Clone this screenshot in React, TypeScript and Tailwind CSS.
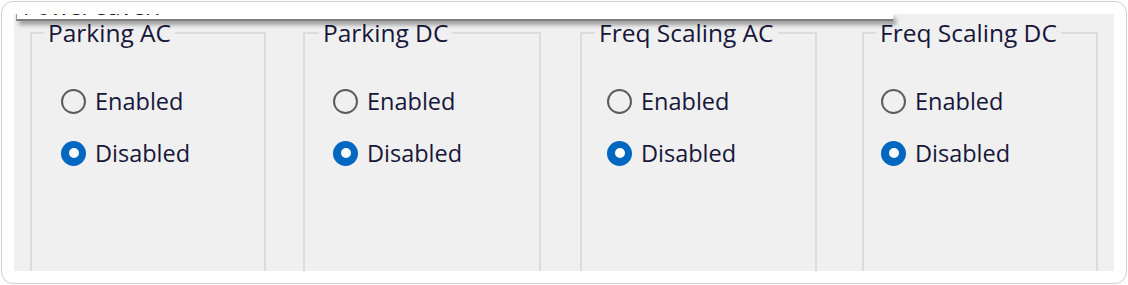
import React from 'react';

const GROUPS = [
  { title: 'Parking AC', ml: 'ml-[16px]', w: 'w-[236px]', legendMl: 'ml-[12px]', radioMl: 'ml-[29px]' },
  { title: 'Parking DC', ml: 'ml-[37px]', w: 'w-[238px]', legendMl: 'ml-[14px]', radioMl: 'ml-[28px]' },
  { title: 'Freq Scaling AC', ml: 'ml-[39px]', w: 'w-[237px]', legendMl: 'ml-[13px]', radioMl: 'ml-[25px]' },
  { title: 'Freq Scaling DC', ml: 'ml-[45px]', w: 'w-[236px]', legendMl: 'ml-[12px]', radioMl: 'ml-[17px]' },
];

const Radio = ({ label, checked }: { label: string; checked?: boolean }) => (
  <div className="flex items-center h-[30px]">
    {checked ? (
      <span className="w-[25px] h-[25px] rounded-full bg-[#0067c0] flex items-center justify-center shrink-0">
        <span className="w-[10px] h-[10px] rounded-full bg-white" />
      </span>
    ) : (
      <span className="w-[25px] h-[25px] rounded-full border-2 border-[#5c5c5c] bg-[#f0f0f0] shrink-0" />
    )}
    <span className="ml-[9px] text-[23.5px] leading-[30px] text-[#16163a]">{label}</span>
  </div>
);

const GroupBox = ({
  title,
  ml,
  w,
  legendMl,
  radioMl,
}: {
  title: string;
  ml: string;
  w: string;
  legendMl: string;
  radioMl: string;
}) => (
  <fieldset className={`${ml} ${w} h-[320px] shrink-0 border-2 border-[#dcdcdc]`}>
    <legend className={`${legendMl} px-[4px] text-[24.5px] leading-[30px] text-[#16163a]`}>{title}</legend>
    <div className={`${radioMl} pt-[38px] flex flex-col gap-[22px]`}>
      <Radio label="Enabled" />
      <Radio label="Disabled" checked />
    </div>
  </fieldset>
);

export default function App() {
  return (
    <div
      className="w-[1128px] h-[285px] bg-white p-px"
      style={{ fontFamily: '"Open Sans", "Noto Sans", sans-serif' }}
    >
      <div className="h-[283px] rounded-[12px] border border-[#cfcfcf] bg-white p-[12px]">
        <div className="relative h-[257px] bg-[#f0f0f0] overflow-hidden">
          {/* dropdown list hanging over the dialog */}
          <div className="absolute left-[2px] top-0 w-[877px] h-[7px] bg-white border-l border-[#9a9a9a] border-b-2 border-b-[#7c7c7c] shadow-[3px_4px_4px_rgba(0,0,0,0.35)] overflow-hidden">
            <div className="ml-[6px] mt-[-19px] text-[23px] leading-[23px] text-[#1a1a1a]">Power saver.</div>
          </div>
          <div className="flex pt-[4px]">
            {GROUPS.map((g) => (
              <GroupBox key={g.title} {...g} />
            ))}
          </div>
        </div>
      </div>
    </div>
  );
}
